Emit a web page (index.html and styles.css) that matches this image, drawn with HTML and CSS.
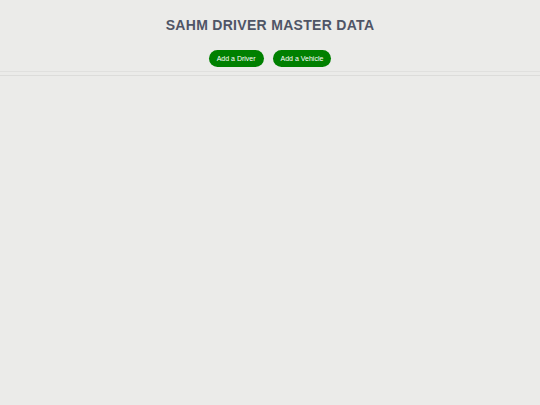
FILE: index.html
```html
<!DOCTYPE html>
<html lang="en">
<head>
    <meta charset="UTF-8">
    <meta name="viewport" content="width=device-width, initial-scale=1.0">
    <title>SAHM Driver Master Data</title>
    <link rel="stylesheet" href="styles.css">
</head>
<body>
    <header>
        <h1>SAHM DRIVER MASTER DATA</h1>
        <div class="actions">
            <button id="add-driver">Add a Driver</button>
            <button id="add-vehicle">Add a Vehicle</button>
        </div>
    </header>
    <hr class="divider">
    <main class="content"></main>
</body>
</html>
```

FILE: styles.css
```css
body {
    font-family: "Liberation Sans", Arial, sans-serif;
    margin: 0;
    padding: 0;
    background-color: #ebebe9;
    min-height: 100vh;
}
header {
    text-align: center;
    padding-top: 16px;
    padding-bottom: 4px;
    border-bottom: 1px solid #e0e0de;
}
h1 {
    margin: 0;
    font-size: 14px;
    font-weight: bold;
    letter-spacing: 0.3px;
    color: #4f5566;
    line-height: 18px;
}
.actions {
    display: flex;
    justify-content: center;
    gap: 9px;
    margin-top: 16px;
}
.actions button {
    background: #008000;
    color: #ffffff;
    border: none;
    border-radius: 9px;
    font-family: "Liberation Sans", Arial, sans-serif;
    font-size: 7px;
    font-weight: normal;
    height: 17px;
    padding: 0 8px;
    cursor: pointer;
}
.divider {
    border: none;
    border-top: 1px solid #dcdcda;
    margin: 3px 0 0;
}
```
